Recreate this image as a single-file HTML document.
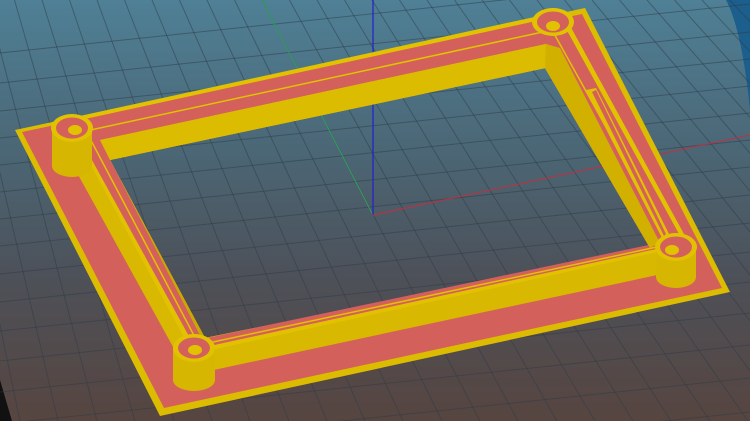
<!DOCTYPE html>
<html><head><meta charset="utf-8"><style>
html,body{margin:0;padding:0;width:750px;height:421px;overflow:hidden;background:#4b5a66}
svg{display:block;position:absolute;left:0;top:0}
</style></head><body>
<svg width="750" height="421" viewBox="0 0 750 421" xmlns="http://www.w3.org/2000/svg">
<defs>
<linearGradient id="bg" x1="0" y1="0" x2="0" y2="1">
<stop offset="0" stop-color="#4f8096"/>
<stop offset="0.35" stop-color="#4b6776"/>
<stop offset="0.65" stop-color="#4d5159"/>
<stop offset="1" stop-color="#574540"/>
</linearGradient>
</defs>
<rect width="750" height="421" fill="url(#bg)"/>
<path d="M726 0 L750 0 L750 110 Q742 30 726 0Z" fill="#1c5e8c"/>
<path d="M0 380 L12 421 L0 421Z" fill="#111"/>
<g stroke="#2e3c48" stroke-opacity="0.5" stroke-width="1" fill="none">
<path d="M-95.5 0L-18 421M-68 0L20 421M-40.5 0L58 421M-13 0L97 421M14.5 0L135 421M42 0L174 421M69.5 0L212 421M97 0L250 421M124.5 0L289 421M152 0L327 421M179.5 0L365 421M207 0L403 421M234.5 0L442 421M262 0L480 421M289.5 0L518 421M317 0L557 421M344.5 0L595 421M372 0L633 421M399.5 0L671 421M427 0L710 421M454.5 0L748 421M482 0L786 421M509.5 0L825 421M537 0L863 421M564.5 0L901 421M592 0L940 421M619.5 0L978 421M647 0L1016 421M674.5 0L1055 421M702 0L1093 421M729.5 0L1131 421"/>
<path d="M0 53L750 -26M0 83L750 4M0 111L750 32M0 138L750 59M0 165L750 86M0 192L750 113M0 219L750 140M0 246L750 167M0 274L750 195M0 302L750 223M0 331L750 252M0 361L750 282M0 392L750 313M0 424L750 345M0 457L750 378M0 491L750 412M0 526L750 447"/>
</g>
<line x1="262" y1="0" x2="373" y2="215" stroke="#2fa05a" stroke-width="1"/>
<line x1="373" y1="0" x2="373" y2="215" stroke="#2020d0" stroke-width="1.2"/>
<line x1="373" y1="215" x2="750" y2="135" stroke="#c03040" stroke-width="1"/>
<!-- plate -->
<path fill-rule="evenodd" fill="#dcbc00" d="M15 130 L585 8 L730 292 L160 416 Z M110 160 L545 68 L650 248 L205 338 Z"/>
<path fill-rule="evenodd" fill="#d4605c" d="M22 132 L582 14 L722 288 L164 408 Z M110 160 L545 68 L650 248 L205 338 Z"/>
<!-- wall outer vertical faces -->
<path fill-rule="evenodd" fill="#d8b800" d="M62 122 L558 14 L688 248 L690 268 L195 374 L188 374 L60 142 Z M110 160 L545 68 L650 248 L205 338 Z"/>
<!-- wall top -->
<path fill-rule="evenodd" fill="#e2c200" d="M66 119 L562 11 L690 245 L193 354 Z M110 160 L545 68 L650 248 L205 338 Z"/>
<path fill-rule="evenodd" fill="#d4605c" d="M71 122 L559 16 L684 243 L196 349 Z M100 140 L546 44 L658 243 L202 339 Z"/>
<path fill="none" stroke="#e2c200" stroke-width="1.5" d="M86 131 L552 30 L671 244 L199 345 Z"/>
<!-- inner faces -->
<path fill="#dcbc00" d="M100 140 L546 44 L546 68 L110 160 Z"/>
<path fill="#d2b000" d="M546 44 L560 48 L660 243 L650 248 L545 68 Z"/>
<path fill="#c9a800" d="M100 140 L110 160 L205 338 L202 339 Z"/>
<!-- posts -->
<g>
<rect x="52" y="128" width="40" height="38" fill="#d6b600"/><ellipse cx="72" cy="166" rx="20" ry="11" fill="#d6b600"/>
<ellipse cx="72" cy="128" rx="21" ry="14" fill="#e2c200"/><ellipse cx="72" cy="128" rx="16" ry="10.5" fill="#d4605c"/><ellipse cx="75" cy="130" rx="7" ry="5" fill="#e2c200"/>
<ellipse cx="553" cy="22" rx="21" ry="14" fill="#e2c200"/><ellipse cx="553" cy="22" rx="16" ry="10.5" fill="#d4605c"/><ellipse cx="553" cy="26" rx="7" ry="5" fill="#e2c200"/>
<rect x="656" y="247" width="40" height="30" fill="#d6b600"/><ellipse cx="676" cy="277" rx="20" ry="11" fill="#d6b600"/>
<ellipse cx="676" cy="247" rx="21" ry="14" fill="#e2c200"/><ellipse cx="676" cy="247" rx="16" ry="10.5" fill="#d4605c"/><ellipse cx="672" cy="250" rx="7" ry="5" fill="#e2c200"/>
<rect x="173" y="348" width="42" height="32" fill="#d6b600"/><ellipse cx="194" cy="380" rx="21" ry="11" fill="#d6b600"/>
<ellipse cx="194" cy="348" rx="21" ry="14" fill="#e2c200"/><ellipse cx="194" cy="348" rx="16" ry="10.5" fill="#d4605c"/><ellipse cx="195" cy="350" rx="7" ry="5" fill="#e2c200"/>
</g>
<path fill="#e2c200" d="M586 90 L596 88 L670 236 L662 238 Z"/>
<path fill="#d4605c" d="M592 92 L596 90 L666 234 L664 236 Z"/>
</svg>
</body></html>
